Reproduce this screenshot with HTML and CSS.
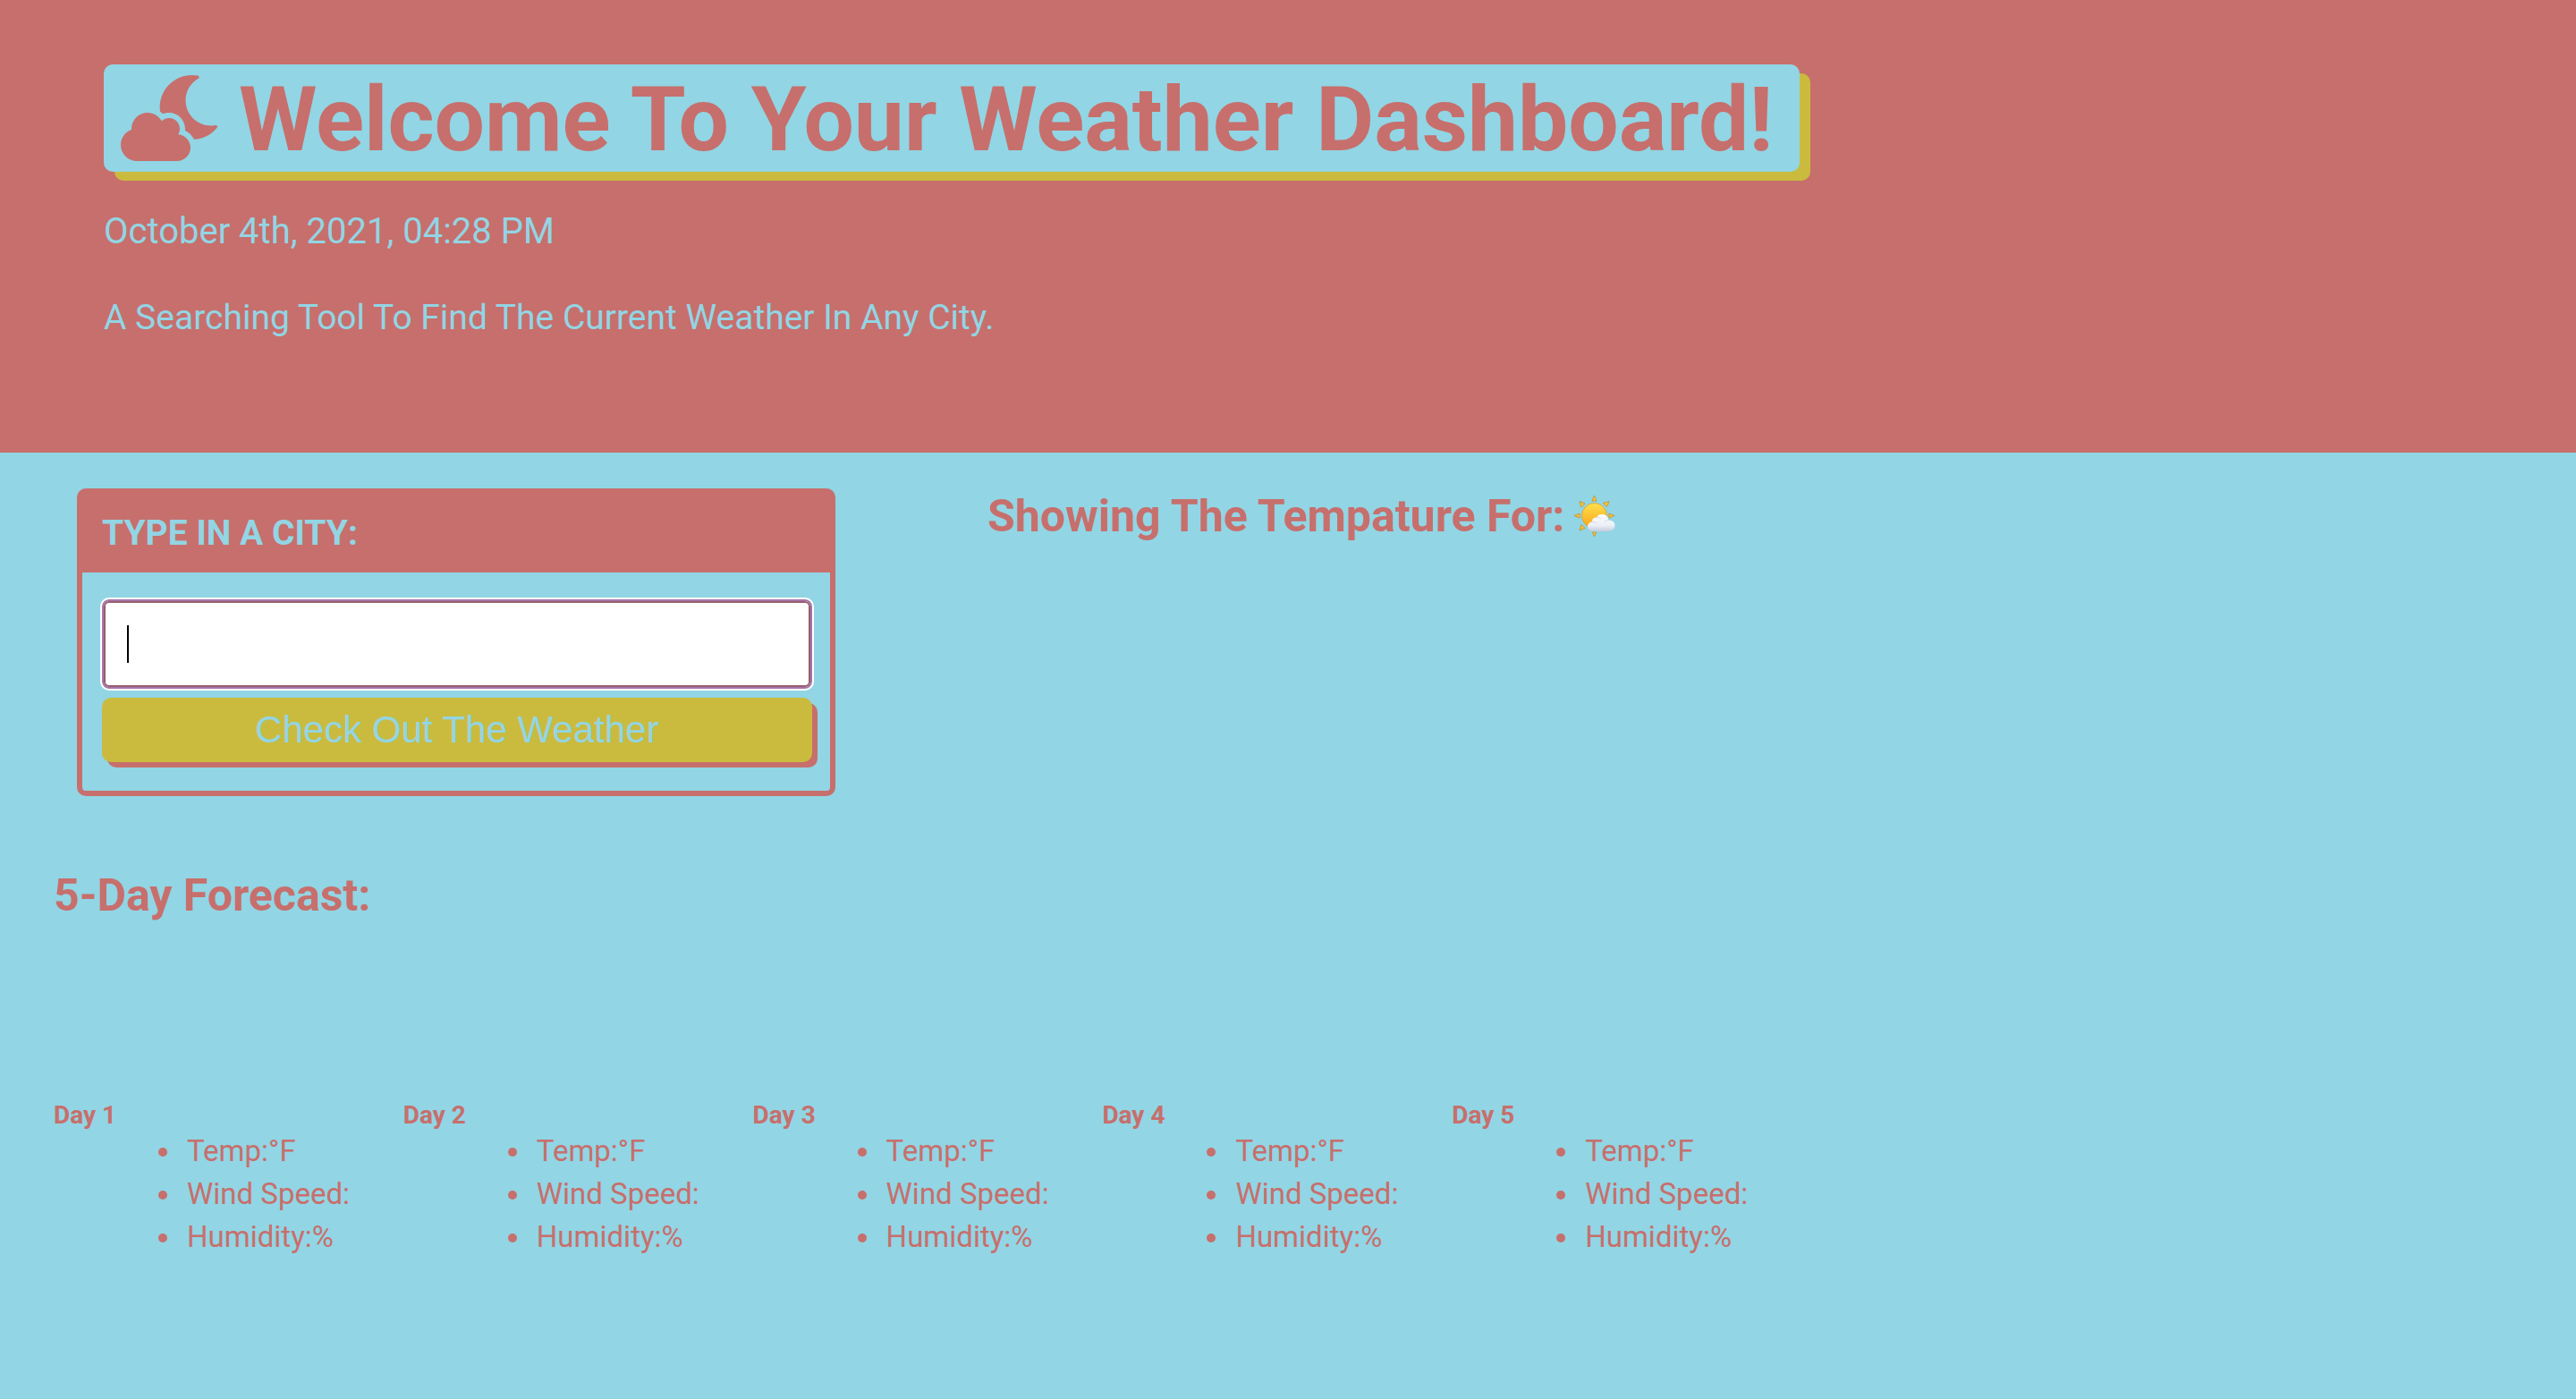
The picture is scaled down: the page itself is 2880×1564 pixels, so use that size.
FILE: index.html
```html
<!DOCTYPE html>
<html lang="en">
<head>
<meta charset="utf-8">
<meta name="viewport" content="width=device-width, initial-scale=1">
<title>Weather Dashboard</title>
<link rel="stylesheet" href="styles.css">
</head>
<body>
<header class="hero">
  <h1 class="hero-title">
    <svg class="hero-icon" viewBox="0 0 576 512" aria-hidden="true"><path fill="currentColor" d="M342.8 352.7c5.7-9.6 9.2-20.7 9.2-32.7 0-35.3-28.7-64-64-64-17.2 0-32.8 6.9-44.3 17.9-16.3-29.6-47.5-49.9-83.7-49.9-53 0-96 43-96 96 0 2 .5 3.8.6 5.7C27.1 338.8 0 374.1 0 416c0 53 43 96 96 96h240c44.2 0 80-35.8 80-80 0-41.9-32.3-75.8-73.2-79.3zm222.5-54.3c-93.1 17.7-178.5-53.7-178.5-147.7 0-54.2 29-104 76.1-130.8 7.3-4.1 5.4-15.1-2.8-16.7C448.4 1.1 436.7 0 425 0 319.1 0 233.1 85.9 233.1 191.9c0 8.5.7 16.8 1.8 25 5.9 4.3 11.6 8.9 16.7 14.2 11.4-4.7 23.7-7.2 36.4-7.2 52.9 0 96 43.1 96 96 0 3.6-.2 7.2-.6 10.7 23.6 10.8 42.4 29.5 53.5 52.6 54.4-3.4 103.7-29.3 137.1-70.4 5.3-6.5-.5-16.1-8.7-14.5z"/></svg>
    <span class="hero-name">Welcome To Your Weather Dashboard!</span>
  </h1>
  <p class="hero-text">October 4th, 2021, 04:28 PM</p>
  <p class="hero-text hero-tagline">A Searching Tool To Find The Current Weather In Any City.</p>
</header>
<main>
  <div class="search-row">
    <form class="card">
      <label class="card-header" for="city">TYPE IN A CITY:</label>
      <div class="card-body">
        <input class="city-input" id="city" type="text" autocomplete="off">
        <button class="search-button" type="button">Check Out The Weather</button>
      </div>
    </form>
    <h2 class="section-title">
      <span>Showing The Tempature For:</span>
      <svg class="sun-icon" viewBox="0 0 48 48" aria-hidden="true">
        <defs>
          <linearGradient id="sun" x1="0" y1="0" x2="0" y2="1"><stop offset="0" stop-color="#fde04a"/><stop offset="1" stop-color="#f8a51b"/></linearGradient>
          <linearGradient id="cloud" x1="0" y1="0" x2="0" y2="1"><stop offset="0" stop-color="#fbfcff"/><stop offset=".65" stop-color="#eceff6"/><stop offset="1" stop-color="#c3cbdc"/></linearGradient>
        </defs>
        <g fill="#fbc531" stroke="#c59a3d" stroke-width="1">
          <path d="M23.500 1l2.500 6h-5zM7 7.500l6 2.500-4 4zM40 7.500l-2.500 6-4-4zM1 23.500l6-2.500v5zM46 23.500l-6-2.500v5zM7 40l2-6.500 4 4zM23.500 47l-2-5h4z"/>
        </g>
        <circle cx="23.500" cy="23.500" r="14" fill="url(#sun)" stroke="#d7a136" stroke-width=".8"/>
        <path d="M23 41c-4 0-7-2-7-5.500 0-3 2.500-5 5-5-.5-3 2-5.500 5-5 1.500-3 4-4 7-3.500 4 .5 6 3 6 6.500 4 0 7.500 2 7.500 6 0 4.500-4 6.500-8 6.500z" fill="url(#cloud)"/>
        <path d="M21 30.500c2-.5 4 .5 5 2M26 25.500c2-.5 3.500 0 5 1.500M39 28.500c-2 0-3.500 1-4.500 2.500" fill="none" stroke="#d5dae6" stroke-width="1"/>
      </svg>
    </h2>
  </div>
  <section class="forecast">
    <h2 class="section-title">5-Day Forecast:</h2>
    <div class="days">
      <article><h3 class="day-title">Day 1</h3><ul class="day-list"><li>Temp:°F</li><li>Wind Speed:</li><li>Humidity:%</li></ul></article>
      <article><h3 class="day-title">Day 2</h3><ul class="day-list"><li>Temp:°F</li><li>Wind Speed:</li><li>Humidity:%</li></ul></article>
      <article><h3 class="day-title">Day 3</h3><ul class="day-list"><li>Temp:°F</li><li>Wind Speed:</li><li>Humidity:%</li></ul></article>
      <article><h3 class="day-title">Day 4</h3><ul class="day-list"><li>Temp:°F</li><li>Wind Speed:</li><li>Humidity:%</li></ul></article>
      <article><h3 class="day-title">Day 5</h3><ul class="day-list"><li>Temp:°F</li><li>Wind Speed:</li><li>Humidity:%</li></ul></article>
    </div>
  </section>
</main>
</body>
</html>
```
FILE: styles.css
```css
:root {
  --coral: #c76f6c;
  --sky: #92d5e4;
  --mustard: #cabb3f;
}

* {
  box-sizing: border-box;
}

body {
  margin: 0;
  background: var(--sky);
  color: var(--coral);
  font-family: Roboto, sans-serif;
}

h1, h2, h3, p, ul {
  margin: 0;
}

.hero {
  padding: 72px 116px 122px;
  background: var(--coral);
  color: var(--sky);
}

.hero-title {
  display: inline-flex;
  align-items: center;
  gap: 24px;
  padding: 0 30px 0 19px;
  border-radius: 10px;
  background: var(--sky);
  box-shadow: 12px 10px 0 var(--mustard);
  color: var(--coral);
  font-size: 100px;
  line-height: 116px;
}

.hero-icon {
  width: 108px;
  height: 96px;
}

.hero-name {
  padding-top: 4px;
}

.hero-text {
  padding-top: 38px;
  font-size: 40px;
  line-height: 58px;
}

.hero-tagline {
  font-size: 39px;
}

.search-row {
  display: grid;
  grid-template-columns: 848px 1fr;
  gap: 170px;
  align-items: start;
  padding: 40px 86px 0;
}

.card {
  border: 6px solid var(--coral);
  border-radius: 10px;
}

.card-header {
  display: block;
  padding: 17px 22px;
  background: var(--coral);
  color: var(--sky);
  font-size: 39px;
  font-weight: 700;
  line-height: 54px;
}

.card-body {
  display: grid;
  gap: 10px;
  padding: 30px 20px 32px 22px;
}

.city-input {
  width: 100%;
  height: 100px;
  padding: 0 26px;
  border: 2px solid #a874ab;
  border-radius: 8px;
  outline: 2px solid #fff;
  background: linear-gradient(#000, #000) 26px 50% / 2px 42px no-repeat #fff;
  box-shadow: inset 0 0 0 2px #965f6b;
  font-size: 42px;
}

.search-button {
  height: 72px;
  padding: 0;
  border: 0;
  border-radius: 10px;
  background: var(--mustard);
  box-shadow: 6px 6px 0 var(--coral);
  color: var(--sky);
  font-family: "Liberation Sans", Arial, sans-serif;
  font-size: 42px;
  line-height: 68px;
}

.section-title {
  display: flex;
  align-items: center;
  gap: 10px;
  font-size: 50px;
  line-height: 62px;
}

.sun-icon {
  width: 48px;
  height: 48px;
}

.forecast {
  padding: 80px 60px 0;
}

.days {
  display: grid;
  grid-template-columns: repeat(5, 1fr);
  max-width: 1954px;
  padding-top: 199px;
}

.day-title {
  font-size: 28px;
  line-height: 32px;
}

.day-list {
  padding-left: 144px;
  font-size: 33px;
  line-height: 48px;
}

.day-list li {
  padding-left: 5px;
}
```
